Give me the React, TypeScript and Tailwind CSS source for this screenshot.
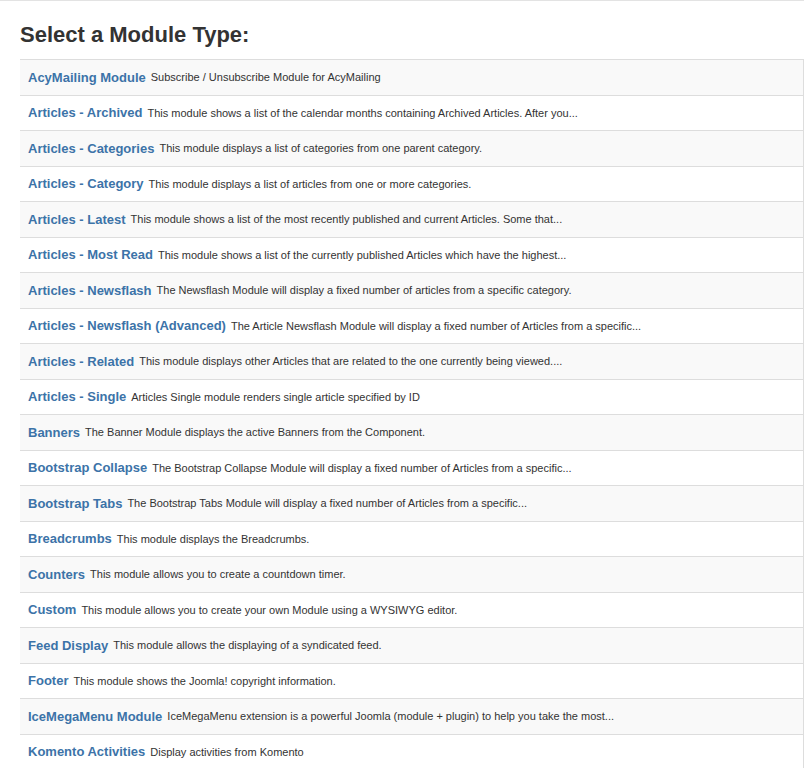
const modules = [
  ["AcyMailing Module", "Subscribe / Unsubscribe Module for AcyMailing"],
  ["Articles - Archived", "This module shows a list of the calendar months containing Archived Articles. After you..."],
  ["Articles - Categories", "This module displays a list of categories from one parent category."],
  ["Articles - Category", "This module displays a list of articles from one or more categories."],
  ["Articles - Latest", "This module shows a list of the most recently published and current Articles. Some that..."],
  ["Articles - Most Read", "This module shows a list of the currently published Articles which have the highest..."],
  ["Articles - Newsflash", "The Newsflash Module will display a fixed number of articles from a specific category."],
  ["Articles - Newsflash (Advanced)", "The Article Newsflash Module will display a fixed number of Articles from a specific..."],
  ["Articles - Related", "This module displays other Articles that are related to the one currently being viewed...."],
  ["Articles - Single", "Articles Single module renders single article specified by ID"],
  ["Banners", "The Banner Module displays the active Banners from the Component."],
  ["Bootstrap Collapse", "The Bootstrap Collapse Module will display a fixed number of Articles from a specific..."],
  ["Bootstrap Tabs", "The Bootstrap Tabs Module will display a fixed number of Articles from a specific..."],
  ["Breadcrumbs", "This module displays the Breadcrumbs."],
  ["Counters", "This module allows you to create a countdown timer."],
  ["Custom", "This module allows you to create your own Module using a WYSIWYG editor."],
  ["Feed Display", "This module allows the displaying of a syndicated feed."],
  ["Footer", "This module shows the Joomla! copyright information."],
  ["IceMegaMenu Module", "IceMegaMenu extension is a powerful Joomla (module + plugin) to help you take the most..."],
  ["Komento Activities", "Display activities from Komento"],
];

export default function App() {
  return (
    <div className="min-h-[768px] bg-white border-t border-[#e3e3e3] font-['Liberation_Sans',Arial,sans-serif] text-[#333]">
      <div className="pl-5">
        <h2 className="text-[22px] font-bold leading-6 pt-[22px] pb-[12px] text-[#333]">
          Select a Module Type:
        </h2>
        <div className="border-r border-[#ddd]">
          {modules.map(([title, desc], i) => (
            <div
              key={title}
              className={`h-[35.53px] border-t border-[#ddd] px-2 flex items-center whitespace-nowrap ${
                i % 2 === 0 ? "bg-[#f9f9f9]" : "bg-white"
              }`}
            >
              <a href="#" className="text-[13px] font-bold text-[#3c73a8]">
                {title}
              </a>
              <span className="text-[11px] ml-[5px]">{desc}</span>
            </div>
          ))}
        </div>
      </div>
    </div>
  );
}
